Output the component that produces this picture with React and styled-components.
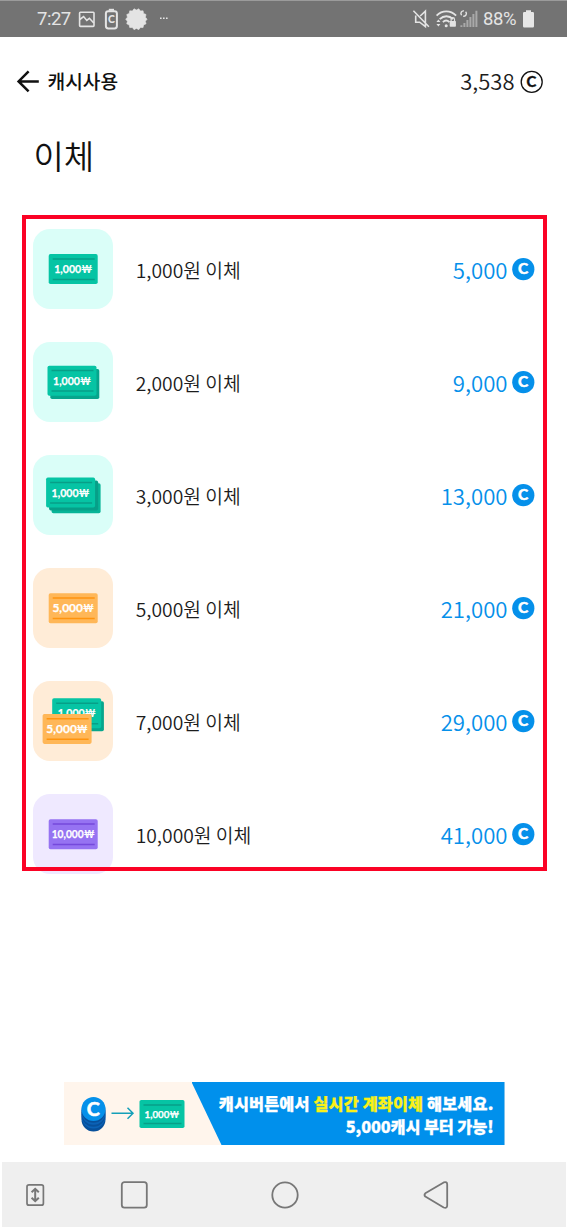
import React from "react";
import styled, { createGlobalStyle } from "styled-components";

const KR = '"Noto Sans CJK KR", "Noto Sans", sans-serif';

const Global = createGlobalStyle`
  *, *::before, *::after { box-sizing: border-box; }
  body { margin: 0; background: #fff; font-family: ${KR}; color: #1c1c1c; }
  svg { display: block; flex: none; overflow: visible; }
`;

const Screen = styled.div`
  width: 567px;
  height: 1228px;
  display: flex;
  flex-direction: column;
  background: #fff;
  overflow: hidden;
`;

const StatusBar = styled.header`
  flex: none;
  height: 37px;
  display: flex;
  justify-content: space-between;
  align-items: center;
  padding: 1px 32px 0 37px;
  background: #737373;
  border-top: 1px solid #9b9b9b;
  color: #e4e4e4;
  font-family: Roboto, sans-serif;
`;

const StatusGroup = styled.div`
  display: flex;
  align-items: center;
  height: 35px;
`;

const StatusText = styled.span`
  font-size: 18.5px;
  line-height: 35px;
  letter-spacing: ${(p) => p.$spacing || "0"};
  width: ${(p) => p.$width}px;
  white-space: nowrap;
`;

const AppBar = styled.div`
  flex: none;
  height: 90px;
  display: flex;
  align-items: center;
  justify-content: space-between;
  padding: 0 24px 0 17px;
`;

const BarSide = styled.div`
  display: flex;
  align-items: center;
  gap: ${(p) => p.$gap}px;
`;

const BarTitle = styled.span`
  margin-top: -2px;
  font-size: 19.2px;
  line-height: 28px;
  font-weight: 500;
  color: #111;
`;

const Balance = styled.span`
  margin-top: -5px;
  font-size: 22px;
  line-height: 28px;
  font-weight: 350;
`;

const Heading = styled.h1`
  flex: none;
  margin: 0;
  height: 88px;
  padding: 4px 0 0 33.5px;
  font-size: 33px;
  line-height: 48px;
  font-weight: 350;
  color: #111;
`;

const List = styled.ul`
  position: relative;
  flex: none;
  list-style: none;
  margin: 0 20.5px 0 21.5px;
  height: 656px;
  padding: 14px 12px 0 11.8px;
  display: flex;
  flex-direction: column;
  gap: 33px;

  &::after {
    content: "";
    position: absolute;
    inset: 0;
    border: 4px solid #fb0225;
    pointer-events: none;
  }
`;

const Row = styled.li`
  flex: none;
  height: 80px;
  display: flex;
  align-items: center;
`;

const Tile = styled.div`
  flex: none;
  width: 80px;
  height: 80px;
  border-radius: 17px;
  background: ${(p) => p.$bg};
`;

const RowLabel = styled.span`
  flex: 1;
  padding: 1px 0 0 22.4px;
  font-size: 19.3px;
  line-height: 28px;
  font-weight: 350;
`;

const Price = styled.span`
  margin-top: -1px;
  margin-right: 4px;
  font-size: 22.2px;
  line-height: 30px;
  font-weight: 350;
  color: #0590ea;
`;

const Banner = styled.div`
  flex: none;
  display: flex;
  width: 441px;
  height: 63px;
  margin: 211px 0 17px 63.5px;
  background: #fff5ec;
`;

const BannerArt = styled.div`
  width: 128px;
  flex: none;
`;

const BannerCopy = styled.div`
  flex: 1;
  padding: 10px 11px 0 0;
  background: #0090ec;
  clip-path: polygon(0 0, 100% 0, 100% 100%, 30px 100%);
  color: #fff;
  font-size: 16.3px;
  line-height: 23px;
  font-weight: 900;
  text-align: right;
  white-space: nowrap;
  -webkit-text-stroke: 0.3px;
`;

const BannerLine = styled.div`
  letter-spacing: ${(p) => p.$spacing}px;
`;

const Highlight = styled.span`
  color: #fbf116;
`;

const NavBar = styled.nav`
  flex: none;
  height: 65px;
  margin: 0 1px 1px 2px;
  display: flex;
  align-items: center;
  background: #efefef;
  padding: 1px 0 0 23px;
`;

const NavItem = styled.div`
  width: ${(p) => p.$width}px;
`;

const Mark = ({ x, y, size, width, color = "#fff", stroke = 0.5 }) => (
  <text
    x={x - width / 2}
    y={y}
    fontFamily="Lato"
    fontWeight="700"
    fontSize={size}
    textLength={width}
    lengthAdjust="spacingAndGlyphs"
    fill={color}
    stroke={color}
    strokeWidth={stroke}
  >
    C
  </text>
);

const Coin = () => (
  <svg width="23" height="23" viewBox="0 0 23 23">
    <circle cx="11.3" cy="11.2" r="11.1" fill="#0590ea" />
    <Mark x={11.2} y={16.4} size={14.8} width={10.2} stroke={0.5} />
  </svg>
);

const BILLS = {
  green: { body: "#06c4a4", line: "#079f88", label: "1,000", size: 38 },
  orange: { body: "#ffb758", line: "#ff940f", label: "5,000", size: 41.5 },
  purple: { body: "#9673f2", line: "#7549dc", label: "10,000", size: 43 },
};

function Bill({ kind, x, y, w = 49, h = 30 }) {
  const b = BILLS[kind];
  const textWidth = (b.size * w) / 49;
  const wonWidth = (11 * w) / 49;
  const start = w / 2 - textWidth / 2;
  return (
    <g transform={`translate(${x} ${y})`} fontFamily="Lato, Inter, sans-serif" fontWeight="700" fontSize={w < 49 ? 10.3 : 11.1}>
      <rect width={w} height={h} rx="1.8" fill={b.body} />
      <path d={`M4 4.9H${w - 3}M4 ${h - 4.6}H${w - 3}`} stroke={b.line} strokeWidth="1.5" />
      <text x={start} y={h / 2 + 4} textLength={textWidth - wonWidth} lengthAdjust="spacingAndGlyphs" fill="#fff" stroke="#fff" strokeWidth=".25">
        {b.label}
      </text>
      <text x={start + textWidth - wonWidth} y={h / 2 + 4} textLength={wonWidth} lengthAdjust="spacingAndGlyphs" fill="#fff">
        ₩
      </text>
    </g>
  );
}

const Shade = ({ x, y, color = "#07a58c" }) => (
  <rect x={x} y={y} width="49" height="30" rx="1.8" fill={color} />
);

const ART = {
  one: <Bill kind="green" x={15.7} y={25.1} />,
  two: (
    <>
      <Shade x={17.3} y={27} />
      <Bill kind="green" x={14.5} y={23.7} />
    </>
  ),
  three: (
    <>
      <Shade x={18.6} y={28.3} color="#08b497" />
      <Shade x={16.1} y={25.5} color="#079f88" />
      <Bill kind="green" x={13.1} y={22.5} />
    </>
  ),
  five: <Bill kind="orange" x={15.7} y={25.2} />,
  seven: (
    <>
      <Shade x={21.9} y={20.3} />
      <Bill kind="green" x={19.2} y={17.3} />
      <Bill kind="orange" x={9.6} y={32.9} />
    </>
  ),
  ten: <Bill kind="purple" x={15.7} y={25.2} />,
};

const ROWS = [
  { label: "1,000원 이체", price: "5,000", bg: "#dafef8", art: "one" },
  { label: "2,000원 이체", price: "9,000", bg: "#dafef8", art: "two" },
  { label: "3,000원 이체", price: "13,000", bg: "#dafef8", art: "three" },
  { label: "5,000원 이체", price: "21,000", bg: "#ffecd7", art: "five" },
  { label: "7,000원 이체", price: "29,000", bg: "#ffecd7", art: "seven" },
  { label: "10,000원 이체", price: "41,000", bg: "#efe9ff", art: "ten" },
];

const sealPoints = Array.from({ length: 28 }, (_, i) => {
  const r = i % 2 ? 9.2 : 10.7;
  const a = (i * Math.PI) / 14;
  return `${(11 + r * Math.cos(a)).toFixed(2)},${(11 + r * Math.sin(a)).toFixed(2)}`;
}).join(" ");

const StatusLeftIcons = () => (
  <svg width="92" height="24" viewBox="0 0 92 24" fill="none" stroke="#e4e4e4">
    <rect x="2.6" y="4.2" width="14.4" height="14.2" rx=".8" strokeWidth="1.6" />
    <path d="M2.8 11.5L6.6 8.5L9.8 12.4L12.4 10.3L16.8 15" strokeWidth="1.6" />
    <rect x="28.9" y="3.2" width="11" height="17.2" rx="2.4" strokeWidth="2" />
    <path d="M31.8 1.8H37" strokeWidth="2" />
    <text x="34.4" y="15.4" textAnchor="middle" fontFamily="Lato" fontWeight="900" fontSize="10.5" fill="#e4e4e4" stroke="none">C</text>
    <polygon points={sealPoints} transform="translate(48.4 .2)" fill="#e4e4e4" stroke="#e4e4e4" strokeWidth=".6" strokeLinejoin="round" />
    <path d="M83 10.2h1.6M86 10.2h1.6M89 10.2h1.6" strokeWidth="1.5" />
  </svg>
);

const StatusRightIcons = () => (
  <svg width="69" height="24" viewBox="0 0 69 24" fill="none" stroke="#e4e4e4">
    <g transform="translate(-1.6 -.8)">
      <path d="M3.3 8.2V15H7.3L13 19.5V4L7.8 8.8M1 3.5L16.5 19.5" strokeWidth="1.6" />
      <g strokeWidth="1.9">
        <path d="M24.2 8.4C29.8 2.8 38 2.8 43.7 8.4" />
        <path d="M27.3 12C31.3 8 36.7 8 40.7 12" />
        <path d="M30.5 15C32.5 13 35 13 37 15" />
      </g>
      <circle cx="33.8" cy="18.5" r="1.5" fill="#e4e4e4" stroke="none" />
      <path d="M24 14.8L26 12.4L28 14.8ZM24 16.8H28L26 19.3Z" fill="#e4e4e4" stroke="none" />
      <rect x="37.3" y="13.7" width="6.2" height="5.8" rx=".7" fill="#e4e4e4" stroke="none" />
      <path d="M38.7 14V12.2A1.7 1.7 0 0 1 42.1 12.2V14" strokeWidth="1.2" />
      <path d="M49.2 8A2.6 2.6 0 0 1 51.6 3.7M53.2 4.5A2.6 2.6 0 0 1 50.8 8.9" strokeWidth="1.4" />
      <path d="M49 19.8V18M52 19.8V15.8M55 19.8V12.8M58 19.8V9.8M61 19.8V6.8M64 19.8V3.5" stroke="#a9a9a9" strokeWidth="2" />
    </g>
  </svg>
);

const BatteryIcon = () => (
  <svg width="12" height="20" viewBox="0 0 12 20">
    <path d="M3 .3H8V2H9.8Q11 2 11 3.2V16.3Q11 17.5 9.8 17.5H1.2Q0 17.5 0 16.3V3.2Q0 2 1.2 2H3Z" fill="#e6e6e6" />
  </svg>
);

const BannerDrawing = () => (
  <svg width="128" height="63" viewBox="0 0 128 63">
    <g>
      <circle cx="29.5" cy="37.4" r="12" fill="#07509b" />
      <circle cx="29.5" cy="34.6" r="12" fill="#0b62b6" />
      <circle cx="29.5" cy="32.8" r="12" fill="#07509b" />
      <circle cx="29.5" cy="30.7" r="12" fill="#0b62b6" />
      <circle cx="29.5" cy="28.8" r="12" fill="#07509b" />
      <circle cx="29.5" cy="27" r="12" fill="#0590ea" />
      <Mark x={29.2} y={33.7} size={19} width={13} stroke={0.6} />
    </g>
    <path d="M47.5 31.2H68.5M63.5 25.7L69 31.2L63.5 36.7" fill="none" stroke="#159fb8" strokeWidth="1.5" />
    <Bill kind="green" x={75.5} y={18} w={45} h={28} />
  </svg>
);

export default function App() {
  return (
    <Screen>
      <Global />
      <StatusBar>
        <StatusGroup>
          <StatusText $width={40} $spacing="-0.5px">7:27</StatusText>
          <StatusLeftIcons />
        </StatusGroup>
        <StatusGroup>
          <StatusRightIcons />
          <StatusText $width={40} $spacing="-0.4px">88%</StatusText>
          <BatteryIcon />
        </StatusGroup>
      </StatusBar>

      <AppBar>
        <BarSide $gap={8.5}>
          <svg width="22" height="22" viewBox="0 0 22 22" fill="none" stroke="#111" strokeWidth="2.5">
            <path d="M21.8 10.4H1.8M11.6 .4L1.6 10.4L11.6 20.4" />
          </svg>
          <BarTitle>캐시사용</BarTitle>
        </BarSide>
        <BarSide $gap={5.5}>
          <Balance>3,538</Balance>
          <svg width="23" height="23" viewBox="0 0 23 23">
            <circle cx="11.7" cy="10.9" r="10.5" fill="none" stroke="#111" strokeWidth="1.3" />
            <Mark x={11.3} y={16} size={14.4} width={9.8} color="#111" stroke={0.4} />
          </svg>
        </BarSide>
      </AppBar>

      <Heading>이체</Heading>

      <List>
        {ROWS.map((r) => (
          <Row key={r.label}>
            <Tile $bg={r.bg}>
              <svg width="80" height="80" viewBox="0 0 80 80">{ART[r.art]}</svg>
            </Tile>
            <RowLabel>{r.label}</RowLabel>
            <Price>{r.price}</Price>
            <Coin />
          </Row>
        ))}
      </List>

      <Banner>
        <BannerArt>
          <BannerDrawing />
        </BannerArt>
        <BannerCopy>
          <BannerLine $spacing={0.15}>
            캐시버튼에서 <Highlight>실시간 계좌이체</Highlight> 해보세요.
          </BannerLine>
          <BannerLine $spacing={-0.1}>5,000캐시 부터 가능!</BannerLine>
        </BannerCopy>
      </Banner>

      <NavBar>
        <NavItem $width={95}>
          <svg width="20" height="24" viewBox="0 0 20 24" fill="none" stroke="#777" strokeWidth="1.7">
            <rect x="2" y="1.8" width="16.4" height="20.4" rx="2" />
            <path d="M10.2 6V18M6.6 9.3L10.2 5.8L13.8 9.3M6.6 14.7L10.2 18.2L13.8 14.7" strokeWidth="2" />
          </svg>
        </NavItem>
        <NavItem $width={151}>
          <svg width="28" height="28" viewBox="0 0 28 28" fill="none" stroke="#777" strokeWidth="1.8">
            <rect x="1.8" y="1.2" width="25" height="25.4" rx="2.6" />
          </svg>
        </NavItem>
        <NavItem $width={152}>
          <svg width="28" height="28" viewBox="0 0 28 28" fill="none" stroke="#777" strokeWidth="1.8">
            <circle cx="14" cy="14" r="12.7" />
          </svg>
        </NavItem>
        <NavItem $width={30}>
          <svg width="26" height="28" viewBox="0 0 26 28" fill="none" stroke="#777" strokeWidth="1.8" strokeLinejoin="round">
            <path d="M2.3 12.3L20.7 1.4Q24.2 .4 24.2 3.4V24.6Q24.2 27.6 20.7 26.5L2.3 15.5Q.7 13.9 2.3 12.3Z" />
          </svg>
        </NavItem>
      </NavBar>
    </Screen>
  );
}
